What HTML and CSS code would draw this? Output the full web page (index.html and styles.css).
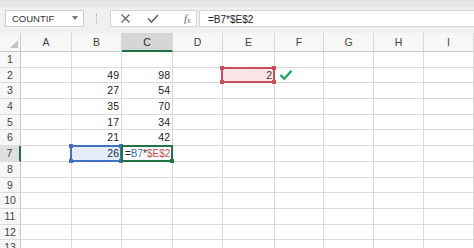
FILE: index.html
```html
<!DOCTYPE html>
<html>
<head>
    <title>Sheet</title>
    <link rel="stylesheet" href="styles.css">
</head>
<body>
    <div class="formula-bar">
        <div class="name-box">
            <span>COUNTIF</span>
            <svg class="drop" width="6" height="4" viewBox="0 0 6 4"><path d="M0 0h6L3 4z" fill="#777"/></svg>
        </div>
        <div class="grip"></div>
        <div class="fx-buttons">
            <svg class="btn" width="11" height="11" viewBox="0 0 11 11"><path d="M1.5 1.5l8 8M9.5 1.5l-8 8" stroke="#666" stroke-width="1.3" fill="none"/></svg>
            <svg class="btn" width="12" height="11" viewBox="0 0 12 11"><path d="M1 5.5l3.5 3.5L11 2" stroke="#666" stroke-width="1.6" fill="none"/></svg>
            <span class="fx">f<sub>x</sub></span>
        </div>
        <div class="formula-input">=B7*$E$2</div>
    </div>

    <div class="sheet">
        <div class="corner"><span class="tri"></span></div>
        <div class="col-head">A</div>
        <div class="col-head">B</div>
        <div class="col-head active">C</div>
        <div class="col-head">D</div>
        <div class="col-head">E</div>
        <div class="col-head">F</div>
        <div class="col-head">G</div>
        <div class="col-head">H</div>
        <div class="col-head">I</div>

        <div class="row-head">1</div>
        <div class="c"></div><div class="c"></div><div class="c"></div><div class="c"></div><div class="c"></div><div class="c"></div><div class="c"></div><div class="c"></div><div class="c"></div>

        <div class="row-head">2</div>
        <div class="c"></div><div class="c">49</div><div class="c">98</div><div class="c"></div>
        <div class="c">2<span class="sel sel-red"><i class="h tl"></i><i class="h tr"></i><i class="h bl"></i><i class="h br"></i></span></div>
        <div class="c"><svg class="ok" width="14" height="12" viewBox="0 0 14 12"><path d="M1.5 6l3.8 3.8L12.5 1.8" stroke="#21a366" stroke-width="2.4" fill="none"/></svg></div>
        <div class="c"></div><div class="c"></div><div class="c"></div>

        <div class="row-head">3</div>
        <div class="c"></div><div class="c">27</div><div class="c">54</div><div class="c"></div><div class="c"></div><div class="c"></div><div class="c"></div><div class="c"></div><div class="c"></div>

        <div class="row-head">4</div>
        <div class="c"></div><div class="c">35</div><div class="c">70</div><div class="c"></div><div class="c"></div><div class="c"></div><div class="c"></div><div class="c"></div><div class="c"></div>

        <div class="row-head">5</div>
        <div class="c"></div><div class="c">17</div><div class="c">34</div><div class="c"></div><div class="c"></div><div class="c"></div><div class="c"></div><div class="c"></div><div class="c"></div>

        <div class="row-head">6</div>
        <div class="c"></div><div class="c">21</div><div class="c">42</div><div class="c"></div><div class="c"></div><div class="c"></div><div class="c"></div><div class="c"></div><div class="c"></div>

        <div class="row-head active">7</div>
        <div class="c"></div>
        <div class="c">26<span class="sel sel-blue"><i class="h tl"></i><i class="h tr"></i><i class="h bl"></i><i class="h br"></i></span></div>
        <div class="c edit">=<span class="ref-b">B7</span>*<span class="ref-e">$E$2</span><span class="caret"></span><span class="sel sel-green"><i class="h br"></i></span></div>
        <div class="c"></div><div class="c"></div><div class="c"></div><div class="c"></div><div class="c"></div><div class="c"></div>

        <div class="row-head">8</div>
        <div class="c"></div><div class="c"></div><div class="c"></div><div class="c"></div><div class="c"></div><div class="c"></div><div class="c"></div><div class="c"></div><div class="c"></div>

        <div class="row-head">9</div>
        <div class="c"></div><div class="c"></div><div class="c"></div><div class="c"></div><div class="c"></div><div class="c"></div><div class="c"></div><div class="c"></div><div class="c"></div>

        <div class="row-head">10</div>
        <div class="c"></div><div class="c"></div><div class="c"></div><div class="c"></div><div class="c"></div><div class="c"></div><div class="c"></div><div class="c"></div><div class="c"></div>

        <div class="row-head">11</div>
        <div class="c"></div><div class="c"></div><div class="c"></div><div class="c"></div><div class="c"></div><div class="c"></div><div class="c"></div><div class="c"></div><div class="c"></div>

        <div class="row-head">12</div>
        <div class="c"></div><div class="c"></div><div class="c"></div><div class="c"></div><div class="c"></div><div class="c"></div><div class="c"></div><div class="c"></div><div class="c"></div>

        <div class="row-head">13</div>
        <div class="c"></div><div class="c"></div><div class="c"></div><div class="c"></div><div class="c"></div><div class="c"></div><div class="c"></div><div class="c"></div><div class="c"></div>
    </div>
</body>
</html>
```

FILE: styles.css
```css
body {
    margin: 0;
    width: 474px;
    height: 248px;
    overflow: hidden;
    background-color: #fff;
    font-family: "Liberation Sans", Arial, sans-serif;
}

.formula-bar {
    height: 33px;
    box-sizing: border-box;
    padding-top: 10px;
    display: flex;
    align-items: flex-start;
    background: linear-gradient(#e4e4e4 0, #e4e4e4 6px, #f0f0f0 8px);
}

.name-box {
    margin-left: 5px;
    width: 79px;
    height: 17px;
    box-sizing: border-box;
    display: flex;
    align-items: center;
    justify-content: space-between;
    padding: 0 5px 0 6px;
    border: 1px solid #cdcdcd;
    background-color: #fff;
    font-size: 9.5px;
    color: #333;
}

.name-box .drop {
    margin-top: -1px;
}

.grip {
    margin: 4px 0 0 12px;
    width: 1px;
    height: 10px;
    border-left: 1px dotted #b0b0b0;
}

.fx-buttons {
    margin-left: 12px;
    width: 87px;
    height: 17px;
    box-sizing: border-box;
    display: flex;
    align-items: center;
    padding-left: 9px;
    gap: 16px;
    border: 1px solid #d4d4d4;
    background-color: #fff;
}

.fx {
    margin-left: 9px;
    font-family: "Liberation Serif", serif;
    font-style: italic;
    font-size: 11px;
    color: #666;
}

.fx sub {
    font-size: 8px;
    vertical-align: -1px;
}

.formula-input {
    flex: 1;
    margin-left: 2px;
    height: 17px;
    box-sizing: border-box;
    padding: 3px 0 0 8px;
    border: 1px solid #d4d4d4;
    border-right: none;
    background-color: #fff;
    font-size: 10px;
    color: #222;
}

.sheet {
    display: grid;
    grid-template-columns: 21px 51px 50px 51px 50px 52px 49px 50px 50px 50px;
    grid-template-rows: 19px repeat(13, 15.7px);
    font-size: 10.5px;
    color: #222;
}

.sheet > div {
    position: relative;
    box-sizing: border-box;
    border-right: 1px solid #dadada;
    border-bottom: 1px solid #dadada;
}

.corner {
    background-color: #f7f7f7;
    border-right-color: #c8c8c8 !important;
    border-bottom-color: #c8c8c8 !important;
}

.corner .tri {
    position: absolute;
    right: 2px;
    bottom: 3px;
    width: 0;
    height: 0;
    border-left: 8px solid transparent;
    border-bottom: 8px solid #c2c2c2;
}

.col-head {
    background-color: #f7f7f7;
    border-bottom-color: #c8c8c8 !important;
    border-right-color: #d9d9d9 !important;
    text-align: center;
    line-height: 19px;
    color: #444;
}

.col-head.active {
    background-color: #d6d6d6;
    border-bottom: 2px solid #217346 !important;
    color: #222;
}

.row-head {
    background-color: #f7f7f7;
    border-right-color: #c8c8c8 !important;
    border-bottom-color: #dcdcdc !important;
    text-align: center;
    line-height: 15px;
    color: #444;
}

.row-head.active {
    background-color: #e0e0e0;
    border-right: 2px solid #217346 !important;
}

.c {
    text-align: right;
    padding-right: 2px;
    line-height: 15px;
    white-space: nowrap;
}

.c.edit {
    text-align: left;
    padding-left: 3px;
    font-size: 10px;
}

.ref-b {
    color: #3f70c4;
}

.ref-e {
    color: #c0504d;
}

.caret {
    display: inline-block;
    width: 1px;
    height: 11px;
    margin-left: 1px;
    vertical-align: -2px;
    background-color: #222;
}

.ok {
    position: absolute;
    left: 4px;
    top: 1px;
}

.sel {
    position: absolute;
    top: -1px;
    left: -2px;
    right: -1px;
    bottom: -1px;
    box-sizing: border-box;
    border: 2px solid;
}

.sel-red {
    border-color: #c5505a;
    background-color: rgba(230, 120, 130, 0.2);
    z-index: 1;
}

.sel-blue {
    border-color: #3f70c4;
    background-color: rgba(70, 120, 210, 0.14);
    z-index: 1;
}

.sel-green {
    border-color: #217346;
    left: -1px;
    z-index: 2;
}

.h {
    position: absolute;
    width: 4px;
    height: 4px;
}

.sel-red .h {
    background-color: #c5505a;
}

.sel-blue .h {
    background-color: #3f70c4;
}

.sel-green .h {
    background-color: #217346;
}

.h.tl { top: -3px; left: -3px; }
.h.tr { top: -3px; right: -3px; }
.h.bl { bottom: -3px; left: -3px; }
.h.br { bottom: -3px; right: -3px; }
```
